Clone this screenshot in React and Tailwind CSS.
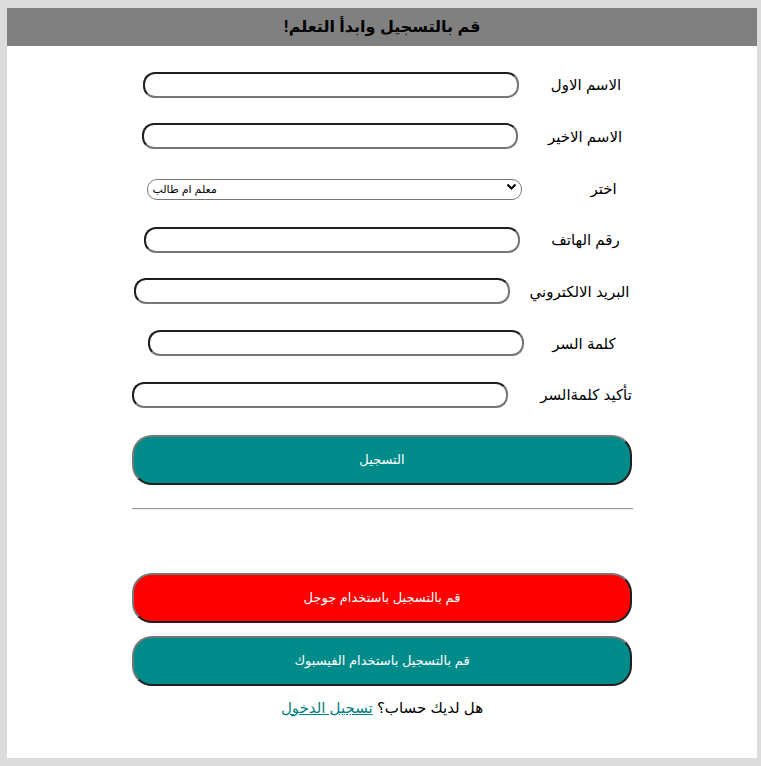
import { useState } from 'react'

const fields = [
  { label: 'الاسم الاول', type: 'text', gap: 'gap-[32px]' },
  { label: 'الاسم الاخير', type: 'text', gap: 'gap-[30px]' },
  { label: 'اختر', type: 'select', gap: 'gap-[68px]' },
  { label: 'رقم الهاتف', type: 'tel', gap: 'gap-[31px]' },
  { label: 'البريد الالكتروني', type: 'email', gap: 'gap-[19px]' },
  { label: 'كلمة السر', type: 'password', gap: 'gap-[28px]' },
  { label: 'تأكيد كلمةالسر', type: 'password', gap: 'gap-[32px]' },
]

function Field({ label, type, gap }) {
  return (
    <div className={`flex h-[51.66px] items-center justify-center ${gap}`}>
      <label className="text-[15px] leading-none text-black whitespace-nowrap">{label}</label>
      {type === 'select' ? (
        <div className="relative w-[375px]" dir="ltr">
          <select
            className="h-[21px] w-full appearance-none rounded-[10px] border border-[#767676] bg-white pl-[4px] text-[11px] text-black"
            defaultValue="none"
          >
            <option value="none">معلم ام طالب</option>
            <option value="teacher">معلم</option>
            <option value="student">طالب</option>
          </select>
          <svg className="pointer-events-none absolute right-[5px] top-[6px]" width="11" height="9" viewBox="0 0 11 9">
            <path d="M1.5 2.5 L5.5 6.5 L9.5 2.5" fill="none" stroke="#000" strokeWidth="2" />
          </svg>
        </div>
      ) : (
        <input
          type={type}
          className="h-[26px] w-[376px] rounded-[12px] border-2 border-t-[#1f1f1f] border-l-[#1f1f1f] border-b-[#767676] border-r-[#767676] bg-white px-2 text-[14px]"
        />
      )}
    </div>
  )
}

function BigButton({ children, color }) {
  return (
    <button
      className={`h-[50px] w-[500px] rounded-[20px] border-2 border-t-[#767676] border-l-[#767676] border-b-[#1f1f1f] border-r-[#1f1f1f] ${color} text-[13px] text-white`}
    >
      {children}
    </button>
  )
}

export default function App() {
  const [sent, setSent] = useState(false)

  return (
    <div
      className="min-h-[766px] bg-[#dcdcdc] pt-[8px] pl-[7px]"
      style={{ fontFamily: '"Liberation Sans", "DejaVu Sans", sans-serif' }}
    >
      <div dir="rtl" className="flex h-[750px] w-[750px] flex-col bg-white">
        {/* Header */}
        <div className="flex h-[38px] items-center justify-center bg-[#808080]">
          <h1 className="text-[16px] font-bold text-black">قم بالتسجيل وابدأ التعلم!</h1>
        </div>

        {/* Fields */}
        <form
          className="mt-[13px] flex flex-col"
          onSubmit={(e) => {
            e.preventDefault()
            setSent(true)
          }}
        >
          {fields.map((f) => (
            <Field key={f.label} {...f} />
          ))}

          <div className="mt-[14px] flex justify-center">
            <BigButton color="bg-[#008b8b]">{sent ? 'تم التسجيل' : 'التسجيل'}</BigButton>
          </div>
        </form>

        <div className="mt-[23px] flex justify-center">
          <hr className="w-[501px] border-0 border-t border-t-[#9a9a9a] border-b border-b-[#eeeeee]" />
        </div>

        <div className="mt-[63px] flex flex-col items-center gap-[13px]">
          <BigButton color="bg-[#ff0000]">قم بالتسجيل باستخدام جوجل</BigButton>
          <BigButton color="bg-[#008b8b]">قم بالتسجيل باستخدام الفيسبوك</BigButton>
        </div>

        <p className="mt-[11px] text-center text-[15px] text-black">
          هل لديك حساب؟ <a href="#" className="text-[#008080] underline">تسجيل الدخول</a>
        </p>
      </div>
    </div>
  )
}
